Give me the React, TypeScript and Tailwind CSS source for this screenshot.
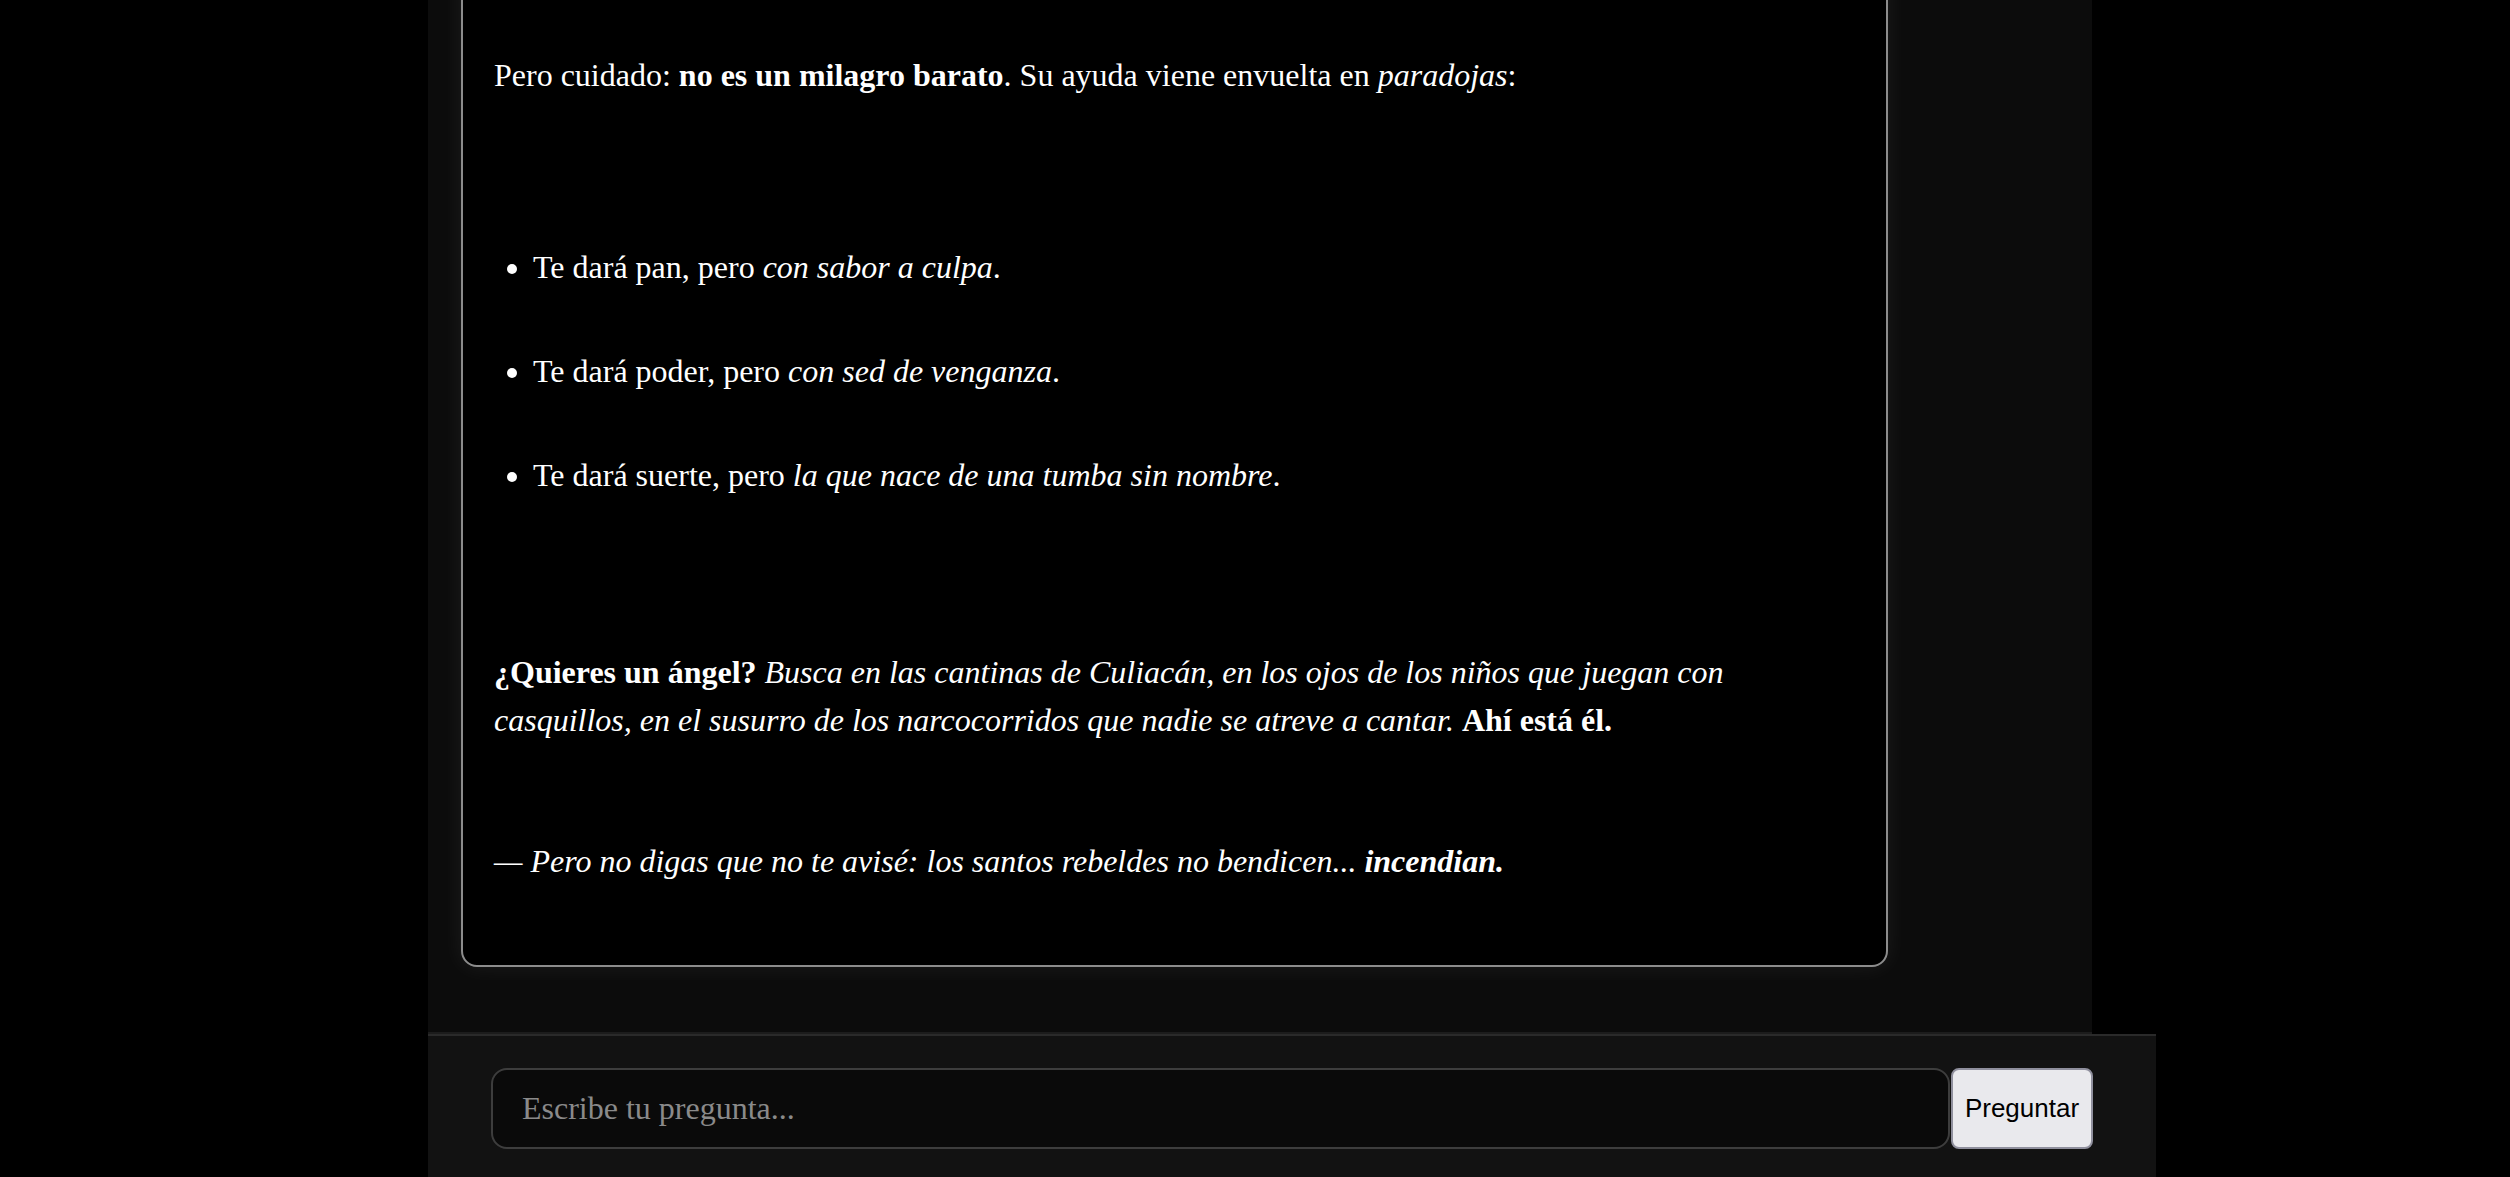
import { useState } from "react";

const serif = { fontFamily: '"Liberation Serif", "Times New Roman", serif' };

const bullets = [
  { plain: "Te dará pan, pero ", em: "con sabor a culpa" },
  { plain: "Te dará poder, pero ", em: "con sed de venganza" },
  { plain: "Te dará suerte, pero ", em: "la que nace de una tumba sin nombre" },
];

export default function App() {
  const [question, setQuestion] = useState("");

  return (
    <div
      className="flex h-[1177px] w-[2510px] overflow-hidden bg-black text-white"
      style={serif}
    >
      <div className="w-[428px] shrink-0" />

      <div className="flex w-[1728px] shrink-0 flex-col">
        {/* chat area */}
        <div className="flex h-[1034px] shrink-0">
          <div className="flex w-[1664px] flex-col justify-end overflow-hidden border-b-2 border-[#1c1c1c] bg-[#0c0c0c] pb-[65px] pl-[33px]">
            <div className="w-[1427px] shrink-0 rounded-2xl border-2 border-[#8c8c8c] bg-black pb-[80px] pl-[31px] pr-[32px] pt-[120px] text-[32px] leading-[48px] shadow-[0_0_22px_rgba(255,255,255,0.07)]">
              <p>
                Pero cuidado: <strong className="font-bold">no es un milagro barato</strong>. Su
                ayuda viene envuelta en <em>paradojas</em>:
              </p>

              <ul className="mt-[144px] list-disc pl-[39px]">
                {bullets.map((b, i) => (
                  <li key={i} className={i > 0 ? "mt-[56px]" : ""}>
                    {b.plain}
                    <em>{b.em}</em>.
                  </li>
                ))}
              </ul>

              <p className="mt-[149px]">
                <strong className="font-bold">¿Quieres un ángel?</strong>{" "}
                <em>
                  Busca en las cantinas de Culiacán, en los ojos de los niños que juegan con
                  casquillos, en el susurro de los narcocorridos que nadie se atreve a cantar.
                </em>{" "}
                <strong className="font-bold">Ahí está él.</strong>
              </p>

              <p className="mt-[93px] italic">
                — Pero no digas que no te avisé: los santos rebeldes no bendicen...{" "}
                <strong className="font-bold">incendian.</strong>
              </p>
            </div>
          </div>
        </div>

        {/* input bar */}
        <div className="flex h-[143px] shrink-0 items-start border-t-2 border-[#2a2a2a] bg-[#121212] pl-[63px] pt-[32px]">
          <input
            value={question}
            onChange={(e) => setQuestion(e.target.value)}
            placeholder="Escribe tu pregunta..."
            className="h-[81px] w-[1459px] rounded-2xl border-2 border-[#3d3d3d] bg-[#0a0a0a] pl-[29px] text-[32px] text-white outline-none placeholder:text-[#8a8a8a]"
            style={serif}
          />
          <button
            className="ml-px h-[81px] w-[142px] rounded-lg border-2 border-[#8f8f9d] bg-[#e9e9ed] text-[26px] text-black"
            style={{ fontFamily: '"Liberation Sans", Arial, sans-serif' }}
          >
            Preguntar
          </button>
        </div>
      </div>
    </div>
  );
}
